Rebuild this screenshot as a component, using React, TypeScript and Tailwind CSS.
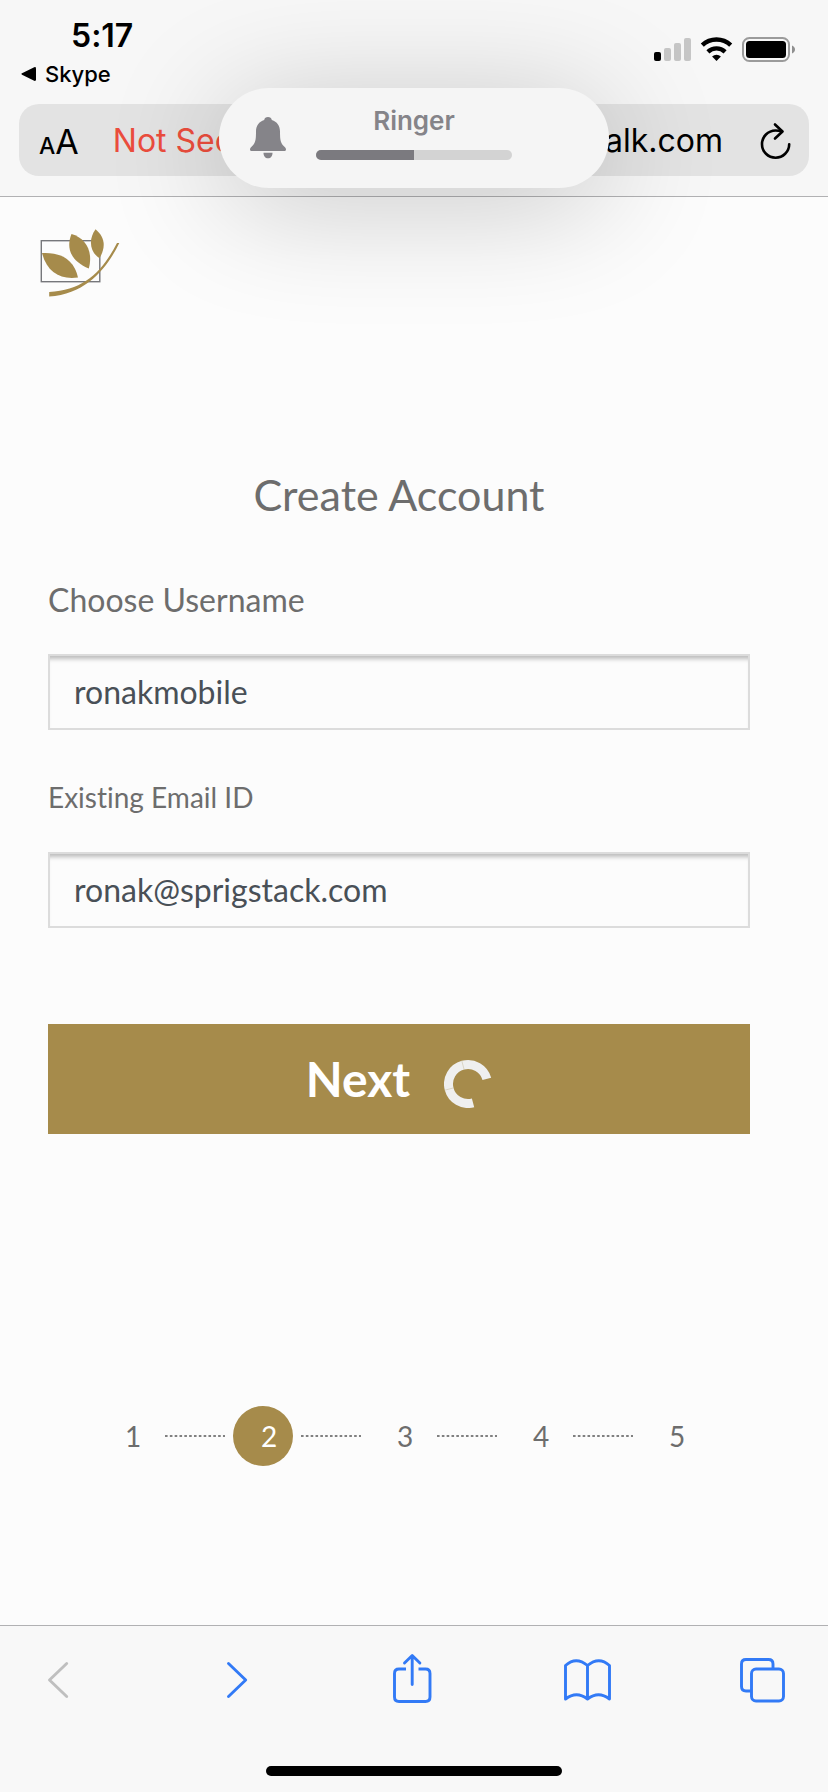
import React, { useState } from "react";

function StatusIcons() {
  return (
    <svg className="h-8 w-[142px]" viewBox="652 34 142 32" aria-hidden="true">
      <rect x="653" y="52" width="7" height="9" rx="2" fill="#000" />
      <rect x="663" y="48" width="7" height="13" rx="2" fill="#c6c6c6" />
      <rect x="673" y="43" width="7" height="18" rx="2" fill="#c6c6c6" />
      <rect x="683" y="38" width="7" height="23" rx="2" fill="#c6c6c6" />
      <g fill="none" stroke="#000" strokeWidth="4.4">
        <path d="M701.3 45.200a20.500 20.500 0 0 1 28.400 0" />
        <path d="M706.900 51.800a12.600 12.600 0 0 1 17.200 0" />
      </g>
      <path d="M715.500 61l-4.400-4.500a6.300 6.300 0 0 1 8.800 0z" fill="#000" />
      <rect x="742" y="38" width="46" height="23" rx="6.500" fill="none" stroke="#9b9b9b" strokeWidth="2" />
      <rect x="745" y="41" width="40" height="17" rx="3.500" fill="#000" />
      <path d="M791 45.500c4 1.500 4 6.500 0 8z" fill="#8f8f8f" />
    </svg>
  );
}

function ReloadIcon() {
  return (
    <svg className="h-10 w-8" viewBox="758 120 32 40" fill="none" stroke="#000" strokeWidth="2.600" strokeLinecap="round" strokeLinejoin="round" aria-hidden="true">
      <path d="M788.200 143.200a13.600 13.600 0 1 1-13.700-13.700q3 0 6.500 1" />
      <path d="M774 123.500l7.500 7-7.500 7" />
    </svg>
  );
}

function BellIcon() {
  return (
    <svg className="h-[42px] w-9" viewBox="0 0 36 42" fill="#858489" aria-hidden="true">
      <path d="M18 0c2 0 3.600 1.300 3.800 3C27 4.600 30 8.800 30 14.500c0 9 .6 11.500 4.200 15 1.200 1.200 1.800 2 1.800 3 0 1-.8 1.500-2 1.500H2c-1.200 0-2-.5-2-1.500s.6-1.800 1.800-3c3.600-3.500 4.200-6 4.200-15C6 8.800 9 4.600 14.200 3 14.400 1.300 16 0 18 0z" />
      <path d="M13.500 35.700h9c0 3.200-1.800 5.600-4.500 5.600s-4.500-2.400-4.500-5.600z" />
    </svg>
  );
}

function Logo() {
  return (
    <svg className="h-[70px] w-20" viewBox="40 228 80 70" role="img" aria-label="Company logo">
      <rect x="41.300" y="240.700" width="58.500" height="41" fill="none" stroke="#76777b" strokeWidth="1.400" />
      <g fill="#a68b4b">
        <path d="M42 253c18-1 32 6 36 24.500C60 280 47 272 42 253z" />
        <path d="M71.500 234c14 4 22 17 17.300 34.500C73 262 65 250 71.500 234z" />
        <path d="M95.500 229.300c9 7.500 11 17 4 29C90 252 88 240 95.500 229.300z" />
        <path d="M117 243h2.300C108 266 88 294 49.200 296.500V292C84 290 102 272 117 243z" />
      </g>
    </svg>
  );
}

function Spinner() {
  return (
    <svg className="h-[58px] w-12" viewBox="0 0 48 58" fill="none" aria-hidden="true">
      <g transform="rotate(-15 24 34)">
        <path d="M24 53.500A19.500 19.500 0 1 1 43.500 34" stroke="#efefef" strokeWidth="9" />
        <path d="M24 19V10M9 34H0" stroke="#cfc6ae" strokeWidth="0.600" />
      </g>
    </svg>
  );
}

function HeaderBar() {
  return (
    <header className="border-b border-[#b1b1b3] bg-[#f7f7f7] px-[19px] pb-5 font-[Inter,sans-serif] text-black">
      <div className="flex h-[104px] items-start justify-between pt-4 pr-[14px]">
        <div className="flex flex-col">
          <span className="pl-[52px] text-[32px] leading-10 font-semibold">5:17</span>
          <a href="#skype" className="flex items-center gap-2 pl-[2px] text-[22px] leading-9 font-medium">
            <svg className="h-4 w-4" viewBox="0 0 16 16" aria-hidden="true">
              <path d="M1 7.300 13.200 1.200Q15 .6 15 2.500v11q0 1.900-1.800 1.300L1 8.700Q-.2 8 1 7.300z" />
            </svg>
            Skype
          </a>
        </div>
        <div className="pt-[18px]">
          <StatusIcons />
        </div>
      </div>
      <div className="flex h-[72px] items-center rounded-[20px] bg-[#e3e3e3] pt-[2px] pr-[18px] pl-5 text-[32px]">
        <button type="button" aria-label="Page settings" className="flex items-baseline">
          <span className="text-[23px] font-medium">A</span>
          <span className="text-[34px]">A</span>
        </button>
        <span className="ml-[34px] text-[#eb4d3d]">Not Secure</span>
        <span className="ml-auto">talk.com</span>
        <button type="button" aria-label="Reload" className="ml-9">
          <ReloadIcon />
        </button>
      </div>
    </header>
  );
}

function RingerOverlay() {
  return (
    <div className="absolute top-[88px] left-1/2 flex h-[100px] w-[390px] -translate-x-1/2 items-center gap-[30px] rounded-[50px] bg-[#f5f5f5] pl-[31px] font-[Inter,sans-serif] shadow-[0_16px_120px_rgba(0,0,0,0.22)]">
      <BellIcon />
      <div className="flex w-[196px] flex-col items-center gap-[13px] pb-[11px]">
        <span className="text-[26px] leading-8 font-semibold text-[#858489]">Ringer</span>
        <div className="h-[10px] w-full overflow-hidden rounded-full bg-[#d3d3d3]">
          <div className="h-full w-1/2 bg-[#7b7a7f]" />
        </div>
      </div>
    </div>
  );
}

const inputClass =
  "h-[76px] w-full rounded-none border-2 border-[#dcdcdc] bg-[#fcfcfc] px-6 pb-[2px] text-[32px] text-[#495057] shadow-[inset_0_6px_4px_-3px_rgba(0,0,0,0.25)] outline-none";

function Stepper({ current }: { current: number }) {
  return (
    <ol className="mt-[272px] flex items-center justify-center gap-2 pr-px text-[28px] text-[#6d6d6d]">
      {[1, 2, 3, 4, 5].map((n) => (
        <React.Fragment key={n}>
          {n > 1 && (
            <li aria-hidden="true">
              <svg className="h-[2px] w-[60px]" viewBox="0 0 60 2">
                <path d="M0 1H60" stroke="#808080" strokeWidth="2" strokeDasharray="2.600 2.230" />
              </svg>
            </li>
          )}
          <li
            aria-current={n === current ? "step" : undefined}
            className={
              n === current
                ? "flex h-[60px] w-[60px] items-center justify-center rounded-full bg-[#a68b4b] pl-[13px] text-white"
                : "flex h-[60px] w-[60px] items-center justify-center pl-[13px]"
            }
          >
            {n}
          </li>
        </React.Fragment>
      ))}
    </ol>
  );
}

function ToolButton({ label, disabled, children }: { label: string; disabled?: boolean; children: React.ReactNode }) {
  return (
    <button type="button" aria-label={label} disabled={disabled} className="text-[#327af6] disabled:text-[#bfbfbf]">
      <svg className="h-[52px] w-12" viewBox="0 0 48 52" fill="none" stroke="currentColor" strokeWidth="2.900" strokeLinecap="round" strokeLinejoin="round" aria-hidden="true">
        {children}
      </svg>
    </button>
  );
}

function Toolbar() {
  return (
    <footer className="flex flex-col items-center border-t border-[#b1b1b3] bg-[#f8f8f8] pb-4">
      <nav aria-label="Browser" className="flex w-full justify-between pt-[26px] pr-[41px] pl-[38px]">
        <ToolButton label="Back" disabled>
          <path d="M28.700 11.500 11.500 28l17.200 16.500" />
        </ToolButton>
        <ToolButton label="Forward">
          <path d="M15.500 11.500 32.700 28 15.500 44.500" />
        </ToolButton>
        <ToolButton label="Share">
          <path d="M17 17h-7q-4.500 0-4.500 4.500v23.500q0 4.500 4.500 4.500h26.500q4.500 0 4.500-4.500V21.500q0-4.500-4.500-4.500h-7" strokeLinecap="butt" />
          <path d="M23.200 32.500V4M15.500 11l7.700-7.500 7.700 7.500" />
        </ToolButton>
        <ToolButton label="Bookmarks">
          <path d="M1.500 13.500q10.500-9.500 22 0 11.500-9.500 22 0V47q-11-8.500-22 0-11-8.500-22 0zM23.500 13.500V47" />
        </ToolButton>
        <ToolButton label="Tabs">
          <rect x="12.500" y="17" width="32" height="32" rx="4.500" />
          <path d="M12.500 39H7q-4.500 0-4.500-4.500V12q0-4.500 4.500-4.500h22.500q4.500 0 4.500 4.500v5" strokeLinecap="butt" />
        </ToolButton>
      </nav>
      <div className="mt-[62px] h-[10px] w-[296px] rounded-full bg-black" />
    </footer>
  );
}

export default function App() {
  const [username, setUsername] = useState("ronakmobile");
  const [email, setEmail] = useState("ronak@sprigstack.com");

  return (
    <div className="relative flex min-h-screen flex-col bg-[#fcfcfc] font-[Lato,sans-serif] [font-variant-ligatures:none]">
      <HeaderBar />
      <main className="flex flex-1 flex-col pr-[78px] pl-12 pb-10">
        <div className="-ml-2 pt-[31px]">
          <Logo />
        </div>
        <form className="mt-[172px] flex flex-col text-[#6d6d6d]" onSubmit={(e) => e.preventDefault()}>
          <h1 className="text-center text-[43px] leading-[50px]">Create Account</h1>
          <div className="mt-[60px] flex flex-col gap-[34px]">
            <label htmlFor="username" className="text-[32px] leading-10">Choose Username</label>
            <input id="username" type="text" value={username} onChange={(e) => setUsername(e.target.value)} className={inputClass} />
          </div>
          <div className="mt-[47px] flex flex-col gap-[35px]">
            <label htmlFor="email" className="text-[28px] leading-10">Existing Email ID</label>
            <input id="email" type="email" value={email} onChange={(e) => setEmail(e.target.value)} className={inputClass} />
          </div>
          <button type="submit" className="mt-24 flex h-[110px] items-center justify-center gap-[34px] bg-[#a68b4b] text-[48px] font-bold text-white">
            Next
            <Spinner />
          </button>
        </form>
        <Stepper current={2} />
      </main>
      <Toolbar />
      <RingerOverlay />
    </div>
  );
}
